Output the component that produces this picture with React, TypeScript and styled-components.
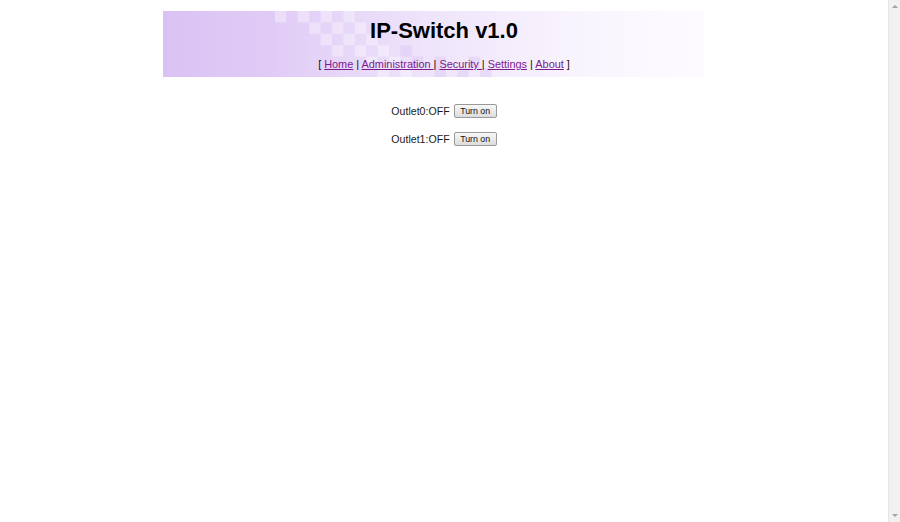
import React from 'react';
import styled, { createGlobalStyle } from 'styled-components';

const GlobalStyle = createGlobalStyle`
  html, body {
    margin: 0;
    padding: 0;
    height: 100%;
    overflow: hidden;
    background: #ffffff;
  }
  body {
    font-family: "Liberation Sans", Arial, sans-serif;
    color: #111111;
  }
`;

const Screen = styled.div`
  display: flex;
  width: 100vw;
  height: 100vh;
`;

const Page = styled.div`
  flex: 1 1 auto;
  display: flex;
  flex-direction: column;
  align-items: center;
  padding-top: 11px;
`;

const Header = styled.div`
  position: relative;
  width: 562px;
  height: 66px;
  display: flex;
  flex-direction: column;
  align-items: center;
`;

const HeaderArt = styled.svg`
  position: absolute;
  left: 0;
  top: 0;
  z-index: 0;
`;

const Title = styled.h1`
  position: relative;
  z-index: 1;
  margin: 7px 0 0;
  font: bold 22px/26px "Liberation Sans", Arial, sans-serif;
  color: #000000;
`;

const Nav = styled.div`
  position: relative;
  z-index: 1;
  margin-top: 14px;
  font: 10.9px/13px "Liberation Sans", Arial, sans-serif;
  color: #111111;
  white-space: pre;
`;

const NavLink = styled.a`
  color: #7b1a8c;
  text-decoration: underline;
`;

const Outlets = styled.div`
  margin-top: 26px;
  display: flex;
  flex-direction: column;
  align-items: center;
  gap: 12px;
`;

const OutletRow = styled.div`
  display: flex;
  align-items: center;
  gap: 4px;
  height: 16px;
  font: 10.6px/16px "Liberation Sans", Arial, sans-serif;
  color: #1a1a1a;
`;

const Button = styled.button`
  height: 14px;
  width: 43px;
  padding: 0;
  border: 1px solid #9a9a9a;
  border-radius: 2px;
  background: linear-gradient(#f8f8f8, #dcdcdc);
  font: 8.8px/12px "Liberation Sans", Arial, sans-serif;
  color: #111111;
`;

const Scrollbar = styled.div`
  flex: 0 0 11px;
  display: flex;
  flex-direction: column;
  justify-content: space-between;
  align-items: center;
  background: #f1f1f1;
  border-left: 1px solid #e6e6e6;
  padding: 5px 0;
`;

const Arrow = styled.div<{ $down?: boolean }>`
  width: 0;
  height: 0;
  border-left: 3px solid transparent;
  border-right: 3px solid transparent;
  ${(p) => (p.$down ? 'border-top: 3px solid #a3a3a3;' : 'border-bottom: 3px solid #a3a3a3;')}
`;

const CELL = 11.4;
const X0 = 275;
const light: [number, number][] = [
  [0, 0], [2, 0], [4, 0], [6, 0],
  [3, 1], [5, 1], [7, 1],
  [4, 2], [6, 2], [8, 2],
  [5, 3], [7, 3], [9, 3],
  [8, 4], [10, 4],
  [9, 5], [11, 5],
];
const dark: [number, number][] = [
  [11, 3], [12, 4], [14, 4],
  [14, 5], [16, 5], [18, 5],
  [17, 4],
];

const HeaderBackground: React.FC = () => (
  <HeaderArt width={541} height={66} viewBox="0 0 541 66">
    <defs>
      <linearGradient id="hdr" x1="0" x2="1" y1="0" y2="0">
        <stop offset="0" stopColor="#dac3f4" />
        <stop offset="0.2" stopColor="#e0cbf6" />
        <stop offset="0.5" stopColor="#efe5fb" />
        <stop offset="0.78" stopColor="#f9f5fe" />
        <stop offset="1" stopColor="#fdfbff" />
      </linearGradient>
    </defs>
    <rect width={541} height={66} fill="url(#hdr)" />
    {light.map(([c, r]) => (
      <rect
        key={`l${c}-${r}`}
        x={X0 - 163 + c * CELL}
        y={r * CELL}
        width={CELL}
        height={CELL}
        fill="#ffffff"
        opacity={0.35}
      />
    ))}
    {dark.map(([c, r]) => (
      <rect
        key={`d${c}-${r}`}
        x={X0 - 163 + c * CELL}
        y={r * CELL}
        width={CELL}
        height={CELL}
        fill="#d6bcf2"
        opacity={0.35}
      />
    ))}
  </HeaderArt>
);

// each link carries the text that follows it; the trailing space in some
// link labels is part of the underline, as on the original device page
const links: { label: string; after: string }[] = [
  { label: 'Home', after: ' | ' },
  { label: 'Administration ', after: '| ' },
  { label: 'Security ', after: '| ' },
  { label: 'Settings', after: ' | ' },
  { label: 'About', after: ' ]' },
];

const outlets = [
  { name: 'Outlet0', state: 'OFF' },
  { name: 'Outlet1', state: 'OFF' },
];

const App: React.FC = () => {
  return (
    <Screen>
      <GlobalStyle />
      <Page>
        <Header>
          <HeaderBackground />
          <Title>IP-Switch v1.0</Title>
          <Nav>
            {'[ '}
            {links.map((l) => (
              <React.Fragment key={l.label}>
                <NavLink href="#">{l.label}</NavLink>
                {l.after}
              </React.Fragment>
            ))}
          </Nav>
        </Header>
        <Outlets>
          {outlets.map((o) => (
            <OutletRow key={o.name}>
              {o.name}:{o.state}
              <Button>Turn on</Button>
            </OutletRow>
          ))}
        </Outlets>
      </Page>
      <Scrollbar>
        <Arrow />
        <Arrow $down />
      </Scrollbar>
    </Screen>
  );
};

export default App;
